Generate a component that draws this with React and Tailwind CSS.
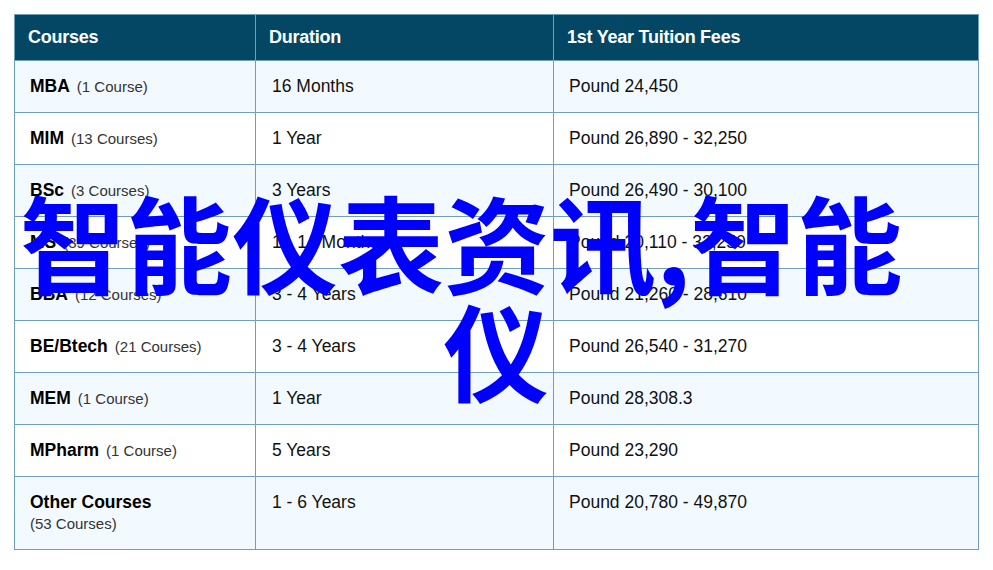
import React from 'react';

const rows = [
  { name: 'MBA', count: '(1 Course)', duration: '16 Months', fees: 'Pound 24,450' },
  { name: 'MIM', count: '(13 Courses)', duration: '1 Year', fees: 'Pound 26,890 - 32,250' },
  { name: 'BSc', count: '(3 Courses)', duration: '3 Years', fees: 'Pound 26,490 - 30,100' },
  { name: 'MS', count: '(39 Courses)', duration: '1 - 14 Months', fees: 'Pound 20,110 - 32,250' },
  { name: 'BBA', count: '(12 Courses)', duration: '3 - 4 Years', fees: 'Pound 21,260 - 28,610' },
  { name: 'BE/Btech', count: '(21 Courses)', duration: '3 - 4 Years', fees: 'Pound 26,540 - 31,270' },
  { name: 'MEM', count: '(1 Course)', duration: '1 Year', fees: 'Pound 28,308.3' },
  { name: 'MPharm', count: '(1 Course)', duration: '5 Years', fees: 'Pound 23,290' },
  { name: 'Other Courses', count: '(53 Courses)', duration: '1 - 6 Years', fees: 'Pound 20,780 - 49,870', stacked: true },
];

export default function App() {
  return (
    <div className="relative w-[993px] h-[570px] overflow-hidden bg-white pt-[14px] pl-[14px] font-['Liberation_Sans',sans-serif] text-[#111]">
      <div className="w-[965px] border border-[#6f9fbd]">
        {/* Header */}
        <div className="grid grid-cols-[240px_298px_1fr] h-[45px] bg-[#044765] text-white font-bold text-[18px] leading-[22px] tracking-[-0.25px]">
          <div className="pl-[13px] pt-[11px]">Courses</div>
          <div className="border-l border-[#6f9fbd] pl-[13px] pt-[11px]">Duration</div>
          <div className="border-l border-[#6f9fbd] pl-[13px] pt-[11px]">1st Year Tuition Fees</div>
        </div>

        {rows.map((row, index) => (
          <div
            key={row.name}
            className={`grid grid-cols-[240px_298px_1fr] border-t border-[#6f9fbd] ${row.stacked ? 'h-[73px]' : 'h-[52px]'} ${index % 2 === 0 ? 'bg-[#f3faff]' : 'bg-white'}`}
          >
            <div className="pl-[15px] pt-[14px] leading-[22px]">
              <span className="font-bold text-[17.5px] text-black">{row.name}</span>
              {row.stacked ? (
                <div className="text-[15px] leading-[20px] text-[#333]">{row.count}</div>
              ) : (
                <span className="ml-[7px] text-[15px] text-[#333]">{row.count}</span>
              )}
            </div>
            <div className="border-l border-[#6f9fbd] pl-[16px] pt-[14px] text-[17.5px] leading-[22px]">{row.duration}</div>
            <div className="border-l border-[#6f9fbd] pl-[15px] pt-[14px] text-[17.5px] leading-[22px]">{row.fees}</div>
          </div>
        ))}
      </div>

      {/* Overlay headline */}
      <div className="absolute left-0 top-[186px] w-[993px] font-bold text-[106px] leading-[108px] text-[#0000ff] font-['Noto_Sans_CJK_SC',sans-serif]">
        <div className="pl-[20px] whitespace-nowrap">智能仪表资讯,智能</div>
        <div className="pl-[443px]">仪</div>
      </div>
    </div>
  );
}
